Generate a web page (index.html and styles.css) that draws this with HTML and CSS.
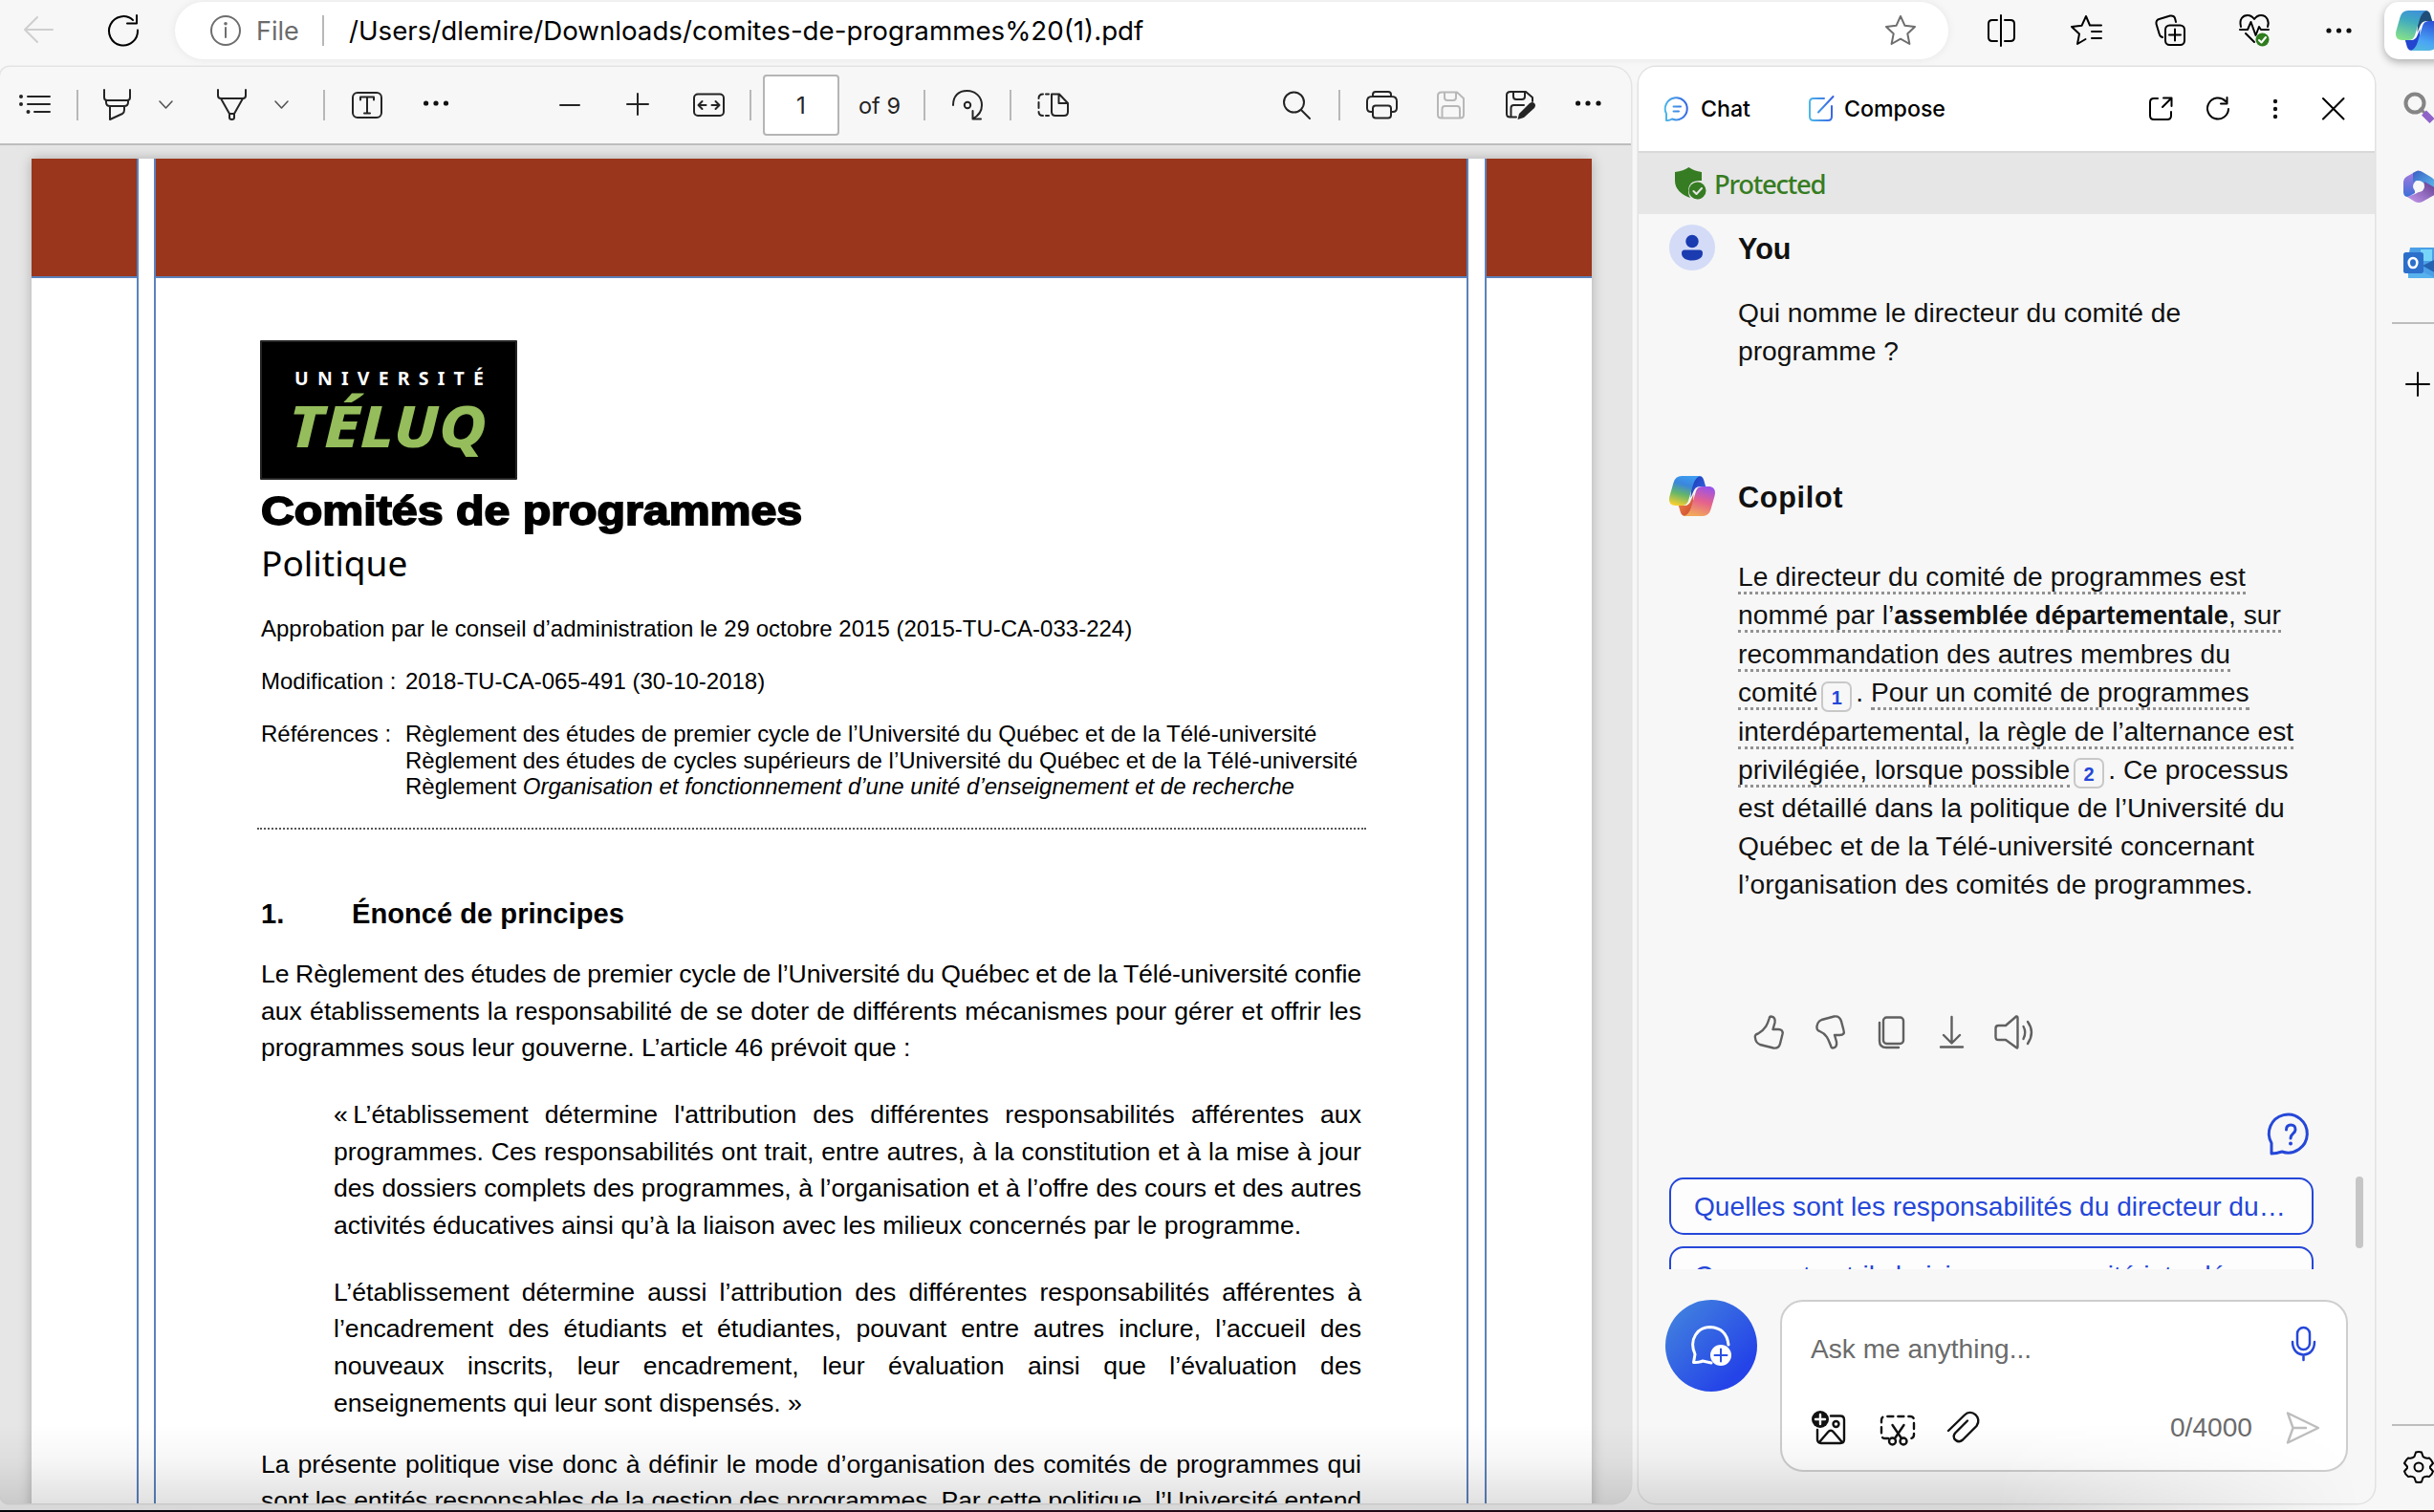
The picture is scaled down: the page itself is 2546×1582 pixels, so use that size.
FILE: index.html
```html
<!DOCTYPE html>
<html lang="fr">
<head>
<meta charset="utf-8">
<title>comites-de-programmes (1).pdf</title>
<link rel="stylesheet" href="styles.css">
</head>
<body>
<svg class="defs" width="0" height="0" aria-hidden="true">
  <defs>
    <linearGradient id="blue" gradientUnits="userSpaceOnUse" x1="0" y1="14" x2="26" y2="12"><stop offset="0" stop-color="#4fb9e8"/><stop offset="1" stop-color="#3560e4"/></linearGradient>
    <linearGradient id="ribbonA" x1="0.6" y1="0" x2="0.3" y2="1"><stop offset="0" stop-color="#3d9cf0"/><stop offset="0.3" stop-color="#3a86dd"/><stop offset="0.62" stop-color="#63b56b"/><stop offset="1" stop-color="#f5cf2e"/></linearGradient>
    <linearGradient id="ribbonB" x1="0.6" y1="0" x2="0.3" y2="1"><stop offset="0" stop-color="#f2a95a"/><stop offset="0.5" stop-color="#e5628c"/><stop offset="1" stop-color="#9a52ea"/></linearGradient>
    <linearGradient id="foldA" x1="0" y1="0" x2="1" y2="1"><stop offset="0" stop-color="#1a35b8"/><stop offset="1" stop-color="#3a6fe6"/></linearGradient>
    <linearGradient id="foldB" x1="0" y1="0" x2="1" y2="1"><stop offset="0" stop-color="#c8452e"/><stop offset="1" stop-color="#f58a4a"/></linearGradient>
    <linearGradient id="ribbonC" x1="0.6" y1="0" x2="0.3" y2="1"><stop offset="0" stop-color="#3e93d8"/><stop offset="0.35" stop-color="#3fa9c0"/><stop offset="1" stop-color="#85e08a"/></linearGradient>
    <linearGradient id="ribbonD" x1="0.6" y1="0" x2="0.3" y2="1"><stop offset="0" stop-color="#53b8e0"/><stop offset="0.3" stop-color="#4aa5f5"/><stop offset="1" stop-color="#2c50d8"/></linearGradient>
    <linearGradient id="m1" x1="0" y1="0" x2="0" y2="1"><stop offset="0" stop-color="#b07be0"/><stop offset="1" stop-color="#3c6fd8"/></linearGradient>
    <linearGradient id="m2" x1="0" y1="0" x2="1" y2="1"><stop offset="0" stop-color="#3b5fc4"/><stop offset="1" stop-color="#5cc4f2"/></linearGradient>
    <linearGradient id="m3" x1="0" y1="1" x2="1" y2="0"><stop offset="0" stop-color="#c79bf0"/><stop offset="1" stop-color="#5d3a8c"/></linearGradient>
    <path id="ribbon" d="M13 0H33C28 1 26 6 24.500 11L20 26Q18.500 31 13 31H7C1 31-1 27 .5 21L4.500 7Q6.500 0 13 0Z"/>
    <path id="fold" d="M27 0H31C35 0 36 3 37 7L38.200 11H32Q27 11 25 17L22.500 23L23.500 8Q25 1 30 0Z"/>
  </defs>
</svg>

<div class="window">
  <header class="topbar">
    <svg class="faint" width="32" height="32" viewBox="0 0 32 32"><path d="M31 15H2M15 2L2 15L15 28"/></svg>
    <svg class="black" width="34" height="34" viewBox="0 0 34 34"><path d="M32 16.500A15 15.200 0 1 1 27 6M31 1V9.500H21"/></svg>
    <div class="address">
      <svg class="grey" width="34" height="34" viewBox="0 0 34 34"><circle cx="17" cy="17" r="15"/><path d="M17 14V24"/><circle cx="17" cy="9.800" r="1.800" class="solid"/></svg>
      <span class="scheme">File</span>
      <i class="sep"></i>
      <span class="url">/Users/dlemire/Downloads/comites-de-programmes%20(1).pdf</span>
      <svg class="grey star" width="34" height="34" viewBox="0 0 34 34"><path d="M17 2L21.500 11.800L32 13L24.300 20.200L26.400 31L17 25.700L7.600 31L9.700 20.200L2 13L12.500 11.800Z"/></svg>
    </div>
    <svg class="black" width="32" height="32" viewBox="0 0 32 32"><path d="M15 0V32M11 5H6Q2 5 2 9V23Q2 27 6 27H11M19 5H25Q29 5 29 9V23Q29 27 25 27H19"/></svg>
    <svg class="black" width="34" height="34" viewBox="0 0 34 34"><path d="M32 11.500H20L16 2L11.500 11.800L1 13L9 20.500L7 31L15.500 26M22 18H32M22 25H32"/></svg>
    <svg class="black" width="34" height="34" viewBox="0 0 34 34"><rect x="11" y="11.500" width="20" height="20.500" rx="4.500"/><path d="M21 15.500V27.500M15 21.500H27M8 24L6 23Q5 22 4.500 20L1.500 10Q1 6 4.500 5L16 1.500Q20 1 21 4L22 8"/></svg>
    <svg class="black" width="34" height="36" viewBox="0 0 34 36"><path d="M2 14C0 6 4 2 9 2Q13 2 16 6Q19 2 23 2C29 2 32 8 30 14M1 17H9L12.500 9L17.500 23L21 14L23 17H31M7 21L16 30"/><circle cx="24.500" cy="27.500" r="7" fill="#2f7d1e" stroke="none"/><path class="on-fill" d="M21 28L23.500 30.500L28 25"/></svg>
    <svg class="dots" width="30" height="10" viewBox="0 0 30 10"><circle cx="3" cy="5" r="2.600"/><circle cx="13.500" cy="5" r="2.600"/><circle cx="24" cy="5" r="2.600"/></svg>
    <div class="copilot-tab">
      <svg width="48" height="42" viewBox="0 0 48 42"><g stroke="none"><use href="#fold" fill="#1f4e78"/><use href="#ribbon" fill="url(#ribbonC)"/><g transform="rotate(180 24 21)"><use href="#fold" fill="#2345cf"/><use href="#ribbon" fill="url(#ribbonD)"/></g></g></svg>
    </div>
  </header>

  <div class="body">
    <main class="viewer">
      <div class="toolbar">
        <svg width="34" height="24" viewBox="0 0 34 24"><path d="M9 3H32M9 11H32M16 19H32"/><g class="solid"><circle cx="2" cy="3" r="2"/><circle cx="2" cy="11" r="2"/><circle cx="9.500" cy="19" r="2"/></g></svg>
        <i class="sep"></i>
        <svg width="32" height="32" viewBox="0 0 32 32"><path d="M2 0V8Q2 11 5 11H26Q29 11 29 8V0M4 11V13Q4 17 8 17H23Q27 17 27 13V11M8 17V31L21 25Q23 24 23 21V17"/></svg>
        <svg class="thin" width="16" height="10" viewBox="0 0 16 10"><path d="M1 1L7.500 8L14 1"/></svg>
        <svg width="32" height="32" viewBox="0 0 32 32"><path d="M1 0V6Q1 9 4 9H27Q30 9 30 6V0M4 9L13 25H18L27 9M13 25V29Q13 31 15.500 31T18 29V25"/></svg>
        <svg class="thin" width="16" height="10" viewBox="0 0 16 10"><path d="M1 1L7.500 8L14 1"/></svg>
        <i class="sep"></i>
        <svg width="32" height="30" viewBox="0 0 32 30"><rect x="1" y="2" width="30" height="26" rx="5"/><path d="M9 9.500V6.500H23V9.500M16 6.500V23M13 23.500H19"/></svg>
        <svg class="dots up" width="30" height="10" viewBox="0 0 30 10"><circle cx="2.600" cy="5" r="2.600"/><circle cx="13" cy="5" r="2.600"/><circle cx="23.500" cy="5" r="2.600"/></svg>
        <svg width="22" height="22" viewBox="0 0 22 22"><path d="M0 11H20"/></svg>
        <svg width="24" height="24" viewBox="0 0 24 24"><path d="M0 11H22M11 0V22"/></svg>
        <svg width="34" height="26" viewBox="0 0 34 26"><rect x="1" y="1.500" width="31" height="22.500" rx="4"/><path d="M13.500 13H6M9.500 9L5.500 13L9.500 17M19.500 13H27M23.500 9L27.500 13L23.500 17"/></svg>
        <i class="sep"></i>
        <span class="page-input">1</span>
        <span class="page-total">of 9</span>
        <i class="sep"></i>
        <svg width="34" height="34" viewBox="0 0 34 34"><path d="M1 17C1 7 7 2 15.500 2S31 8 31 17Q31 26 22 31M21.500 23V31.500H30"/><circle cx="16" cy="17" r="3.200"/></svg>
        <i class="sep"></i>
        <svg width="34" height="26" viewBox="0 0 34 26"><path d="M15 1.500H23L32 11V20Q32 24 28 24H19Q15 24 15 20ZM22.500 1.500V11H32M6 1.500Q1.500 1.500 1.500 6M1.500 10V16M1.500 20Q1.500 24 6 24M9 1.500H12M9 24H12"/></svg>
        <svg width="32" height="30" viewBox="0 0 32 30"><circle cx="11.500" cy="12" r="10.500"/><path d="M19 20L28 29"/></svg>
        <i class="sep"></i>
        <svg width="34" height="30" viewBox="0 0 34 30"><path d="M7 22H5Q1 22 1 18V11Q1 6 6 6H27Q32 6 32 11V18Q32 22 28 22H26M7 6V4Q7 1 10 1H23Q26 1 26 4V6"/><rect x="7" y="15.500" width="19" height="13" rx="3"/></svg>
        <svg class="disabled" width="30" height="30" viewBox="0 0 30 30"><path d="M5 1.500H21L28 8V25Q28 28.500 24.500 28.500H4.500Q1 28.500 1 25V5Q1 1.500 5 1.500M8 1.500V7Q8 10 11 10H17Q20 10 20 7V1.500M5.500 28V19Q5.500 16 8.500 16H21Q24 16 24 19V28"/></svg>
        <svg width="34" height="32" viewBox="0 0 34 32"><path d="M11 28.500H4.500Q1 28.500 1 25V5.500Q1 2 5 2H21L28 8V12M8 2V7Q8 10 11 10H17Q20 10 20 7V2M5.500 28V19Q5.500 16 8.500 16H19"/><path class="solid" d="M12.500 31L14 25L25 14Q28 12 30 14T30 19L19 29Z"/></svg>
        <svg class="dots up" width="30" height="10" viewBox="0 0 30 10"><circle cx="2.600" cy="5" r="2.600"/><circle cx="13" cy="5" r="2.600"/><circle cx="24" cy="5" r="2.600"/></svg>
      </div>
      <div class="canvas">
        <article class="page">
          <div class="band"></div>
          <div class="gutter"></div>
          <div class="band content">
            <svg class="logo" width="267" height="144" viewBox="0 0 267 144"><rect width="267" height="144" fill="#000"/><text class="logo-top" x="35" y="46" textLength="198">UNIVERSITÉ</text><text class="logo-main" x="29" y="111" textLength="207" lengthAdjust="spacingAndGlyphs">TÉLUQ</text></svg>
            <h1><span>Comités de programmes</span></h1>
            <h2>Politique</h2>
            <p class="meta">Approbation par le conseil d’administration le 29 octobre 2015 (2015-TU-CA-033-224)</p>
            <div class="meta row"><span class="label">Modification :</span><span>2018-TU-CA-065-491 (30-10-2018)</span></div>
            <div class="meta row refs"><span class="label">Références :</span><div>Règlement des études de premier cycle de l’Université du Québec et de la Télé-université<br>Règlement des études de cycles supérieurs de l’Université du Québec et de la Télé-université<br>Règlement <em>Organisation et fonctionnement d’une unité d’enseignement et de recherche</em></div></div>
            <div class="rule"></div>
            <h3><span class="num">1.</span>Énoncé de principes</h3>
            <div class="para">
              <p class="full tight">Le Règlement des études de premier cycle de l’Université du Québec et de la Télé-université confie</p>
              <p class="full">aux établissements la responsabilité de se doter de différents mécanismes pour gérer et offrir les</p>
              <p>programmes sous leur gouverne. L’article 46 prévoit que :</p>
            </div>
            <div class="para quote">
              <p class="full">«&#8239;L’établissement détermine l'attribution des différentes responsabilités afférentes aux</p>
              <p class="full">programmes. Ces responsabilités ont trait, entre autres, à la constitution et à la mise à jour</p>
              <p class="full">des dossiers complets des programmes, à l’organisation et à l’offre des cours et des autres</p>
              <p>activités éducatives ainsi qu’à la liaison avec les milieux concernés par le programme.</p>
            </div>
            <div class="para quote">
              <p class="full">L’établissement détermine aussi l’attribution des différentes responsabilités afférentes à</p>
              <p class="full">l’encadrement des étudiants et étudiantes, pouvant entre autres inclure, l’accueil des</p>
              <p class="full">nouveaux inscrits, leur encadrement, leur évaluation ainsi que l’évaluation des</p>
              <p>enseignements qui leur sont dispensés. »</p>
            </div>
            <div class="para after">
              <p class="full">La présente politique vise donc à définir le mode d’organisation des comités de programmes qui</p>
              <p class="full tight">sont les entités responsables de la gestion des programmes. Par cette politique, l’Université entend</p>
            </div>
          </div>
          <div class="gutter"></div>
          <div class="band"></div>
        </article>
      </div>
    </main>

    <aside class="panel">
      <div class="panel-head">
        <svg class="tint" width="28" height="28" viewBox="0 0 28 28"><path d="M2 26V19A11.500 11.500 0 1 1 8 24.500Q5 26.500 2 26ZM9.500 11.500H17M9.500 16.500H15"/></svg>
        <span>Chat</span>
        <svg class="tint" width="28" height="28" viewBox="0 0 28 28"><path d="M16 3H5Q1 3 1 7V22Q1 26 5 26H20Q24 26 24 22V11M10 17.500L25.500 1"/></svg>
        <span>Compose</span>
        <svg class="black" width="26" height="26" viewBox="0 0 26 26"><path d="M9 2H5Q1 2 1 6V20Q1 24 5 24H19Q23 24 23 20V16M15 1.500H23.500V10M23 2L14 11"/></svg>
        <svg class="black" width="26" height="26" viewBox="0 0 26 26"><path d="M23 13A11 11 0 1 1 20 5M21.500 1V7.500H15"/></svg>
        <svg class="dots" width="8" height="24" viewBox="0 0 8 24"><circle cx="4" cy="4" r="2.200"/><circle cx="4" cy="12" r="2.200"/><circle cx="4" cy="20" r="2.200"/></svg>
        <svg class="black" width="24" height="24" viewBox="0 0 24 24"><path d="M1 1L22.500 22.500M22.500 1L1 22.500"/></svg>
      </div>
      <div class="protected">
        <svg width="34" height="36" viewBox="0 0 34 36"><g stroke="none" fill="#367c22"><path d="M14.500 1Q20 5 28 6V15Q14 14 14 26Q14 30 16 33Q0 27 0 15V6Q9 5 14.500 1Z"/><circle cx="23.500" cy="25.500" r="9"/></g><path class="on-fill" d="M19.500 26L22.500 29L28 23"/></svg>
        <span>Protected</span>
      </div>
      <div class="chat">
        <div class="who">
          <svg width="48" height="48" viewBox="0 0 48 48"><g stroke="none"><circle cx="24" cy="24" r="24" fill="#d3dbf7"/><g fill="#1b3bb0"><circle cx="24" cy="17.500" r="6.700"/><path d="M16 26.500H32Q35 26.500 35 30C35 35 30 37.500 24 37.500S13 35 13 30Q13 26.500 16 26.500Z"/></g></g></svg>
          <span>You</span>
        </div>
        <p class="msg">Qui nomme le directeur du comité de<br>programme ?</p>
        <div class="who bot">
          <svg width="48" height="42" viewBox="0 0 48 42"><g stroke="none"><use href="#fold" fill="url(#foldA)"/><use href="#ribbon" fill="url(#ribbonA)"/><g transform="rotate(180 24 21)"><use href="#fold" fill="url(#foldB)"/><use href="#ribbon" fill="url(#ribbonB)"/></g></g></svg>
          <span>Copilot</span>
        </div>
        <p class="msg reply"><u>Le directeur du comité de programmes est</u><br><u>nommé par l’<b>assemblée départementale</b>, sur</u><br><u>recommandation des autres membres du</u><br><u>comité</u><sup>1</sup>. <u>Pour un comité de programmes</u><br><u>interdépartemental, la règle de l’alternance est</u><br><u>privilégiée, lorsque possible</u><sup>2</sup>. Ce processus<br>est détaillé dans la politique de l’Université du<br>Québec et de la Télé-université concernant<br>l’organisation des comités de programmes.</p>
        <div class="actions">
          <svg width="32" height="36" viewBox="0 0 32 36"><path d="M17.500 1.500Q22.500 2 21.500 8L19.500 15H25Q30.500 15 29.500 20L27 30Q25.500 35.500 20 34.500L6 31Q1.500 29 1 24Q0 20.500 4 19.500C12 15 14 9 15.500 4Q16 1.500 17.500 1.500Z"/></svg>
          <svg width="32" height="36" viewBox="0 0 32 36"><path d="M18 34.500Q23 34 22 28L20 21H25.500Q31 21 29.500 16L27 6.500Q25 .5 19.500 1.500L6.500 5Q2 7 1.500 12Q1 16 4.500 17C12 20 14 27 16 32Q16.500 34.500 18 34.500Z"/></svg>
          <svg width="30" height="36" viewBox="0 0 30 36"><rect x="5" y="2.500" width="21" height="27.500" rx="3.500"/><path d="M1 8V27Q1 34 8 34H21"/></svg>
          <svg width="28" height="36" viewBox="0 0 28 36"><path d="M12.500 2V28M4 21L12.500 29.500L21 21M1 33.500H24"/></svg>
          <svg width="44" height="36" viewBox="0 0 44 36"><path d="M1.500 14Q1.500 11 4.500 11H12L23 1.500Q24.500 1 24.500 3V33Q24.500 35.500 23 34L12 26H4.500Q1.500 26 1.500 23ZM30.500 12Q34 18 30.500 25M35 7Q43 18 35 30"/></svg>
        </div>
        <svg class="ask" width="44" height="44" viewBox="0 0 44 44"><path d="M2 42V31A20 20 0 1 1 13 40Q7 42 2 42Z"/><path d="M17.500 17Q17.500 12 22.300 12T27 17C27 21 22 21 22 26"/><circle cx="22" cy="31.500" r="2" fill="#2547d8" stroke="none"/></svg>
        <div class="suggestion">Quelles sont les responsabilités du directeur du…</div>
        <div class="suggestion">Comment est-il choisi pour un comité interdép…</div>
        <i class="thumb"></i>
      </div>
      <div class="composer">
        <div class="new-topic"><svg width="44" height="44" viewBox="0 0 44 44"><path class="bubble" d="M22 40L13 38Q8 40 3.500 39.500L5 31C-2 15 8 2.500 21 2.500Q38 3.500 40 21"/><circle cx="32" cy="32" r="11" fill="#fff" stroke="none"/><path stroke="#2a50e4" d="M32 25.500V38.500M25.500 32H38.500"/></svg></div>
        <div class="prompt">
          <div class="prompt-row">
            <span>Ask me anything...</span>
            <svg class="mic" width="28" height="38" viewBox="0 0 28 38"><rect x="7" y="2" width="13" height="23" rx="6.500"/><path d="M2 17C2 35 25 35 25 17M13.500 30.500V36"/></svg>
          </div>
          <div class="prompt-row tools">
            <svg width="38" height="38" viewBox="0 0 38 38"><circle cx="9" cy="10" r="9" fill="#111" stroke="none"/><path class="on-fill" d="M9 5V15M4 10H14"/><path d="M20 6.500H30Q34 6.500 34 10.500V31Q34 35 30 35H10Q6 35 6 31V21M8 34L17 23.500Q20 20 23 23.500L32 34"/><circle cx="25.500" cy="15" r="3"/></svg>
            <svg width="38" height="38" viewBox="0 0 38 38"><path stroke-dasharray="6 5" d="M8 30H5Q1 30 1 26V11Q1 7 5 7H31Q35 7 35 11V26Q35 30 31 30H28"/><path d="M12.500 16L22 30M24.500 16L15 30"/><circle cx="12.500" cy="33" r="3.500"/><circle cx="24" cy="33" r="3.500"/></svg>
            <svg width="38" height="38" viewBox="0 0 38 38"><path d="M1 22L18 5.500C25-2 37 8 30.500 17L16 31.500C11 36 4 30 8 24.500L21 11.500"/></svg>
            <span>0/4000</span>
            <svg class="send" width="36" height="36" viewBox="0 0 36 36"><path d="M1 2.500L33 18L1 33.500L6.500 18ZM6.500 18H20"/></svg>
          </div>
        </div>
      </div>
    </aside>

    <nav class="rail">
      <svg class="search" width="36" height="36" viewBox="0 0 36 36"><circle cx="12" cy="12" r="9.500" stroke="#858585" stroke-width="4"/><path stroke="#858585" stroke-width="3" d="M18 18L23 23"/><path stroke="#8f63c9" stroke-width="7" stroke-linecap="butt" d="M21.500 22L30 30.500"/></svg>
      <svg class="office" width="34" height="36" viewBox="0 0 34 36"><g stroke="none"><path fill="url(#m1)" d="M12 3L3 8Q0 10 0 13V24Q0 29 5 29L12 25V13L16 1Z"/><path fill="url(#m2)" d="M12 3Q16 .5 20 3L30 9Q34 12 34 16V22L22 15L14 12L10 14V4Z"/><path fill="url(#m3)" d="M22 13L34 20V26L20 34Q16 36 12 34L4 29L12 26L20 22Z"/><circle cx="16" cy="18" r="6" fill="#f7f7f7"/></g></svg>
      <svg class="outlook" width="34" height="34" viewBox="0 0 34 34"><g stroke="none"><path fill="#4b9fe6" d="M7 1H34V32H5V12Z"/><path fill="#77d5fa" d="M18 3H30V15H18Z"/><path fill="#2563b0" d="M20 20L34 13V28Z"/><path fill="#58b2ee" d="M6 20L34 33H5Z"/><rect y="6" width="21" height="22" rx="2.500" fill="#2c6fcb"/></g><ellipse cx="10" cy="17" rx="4.300" ry="5" stroke="#fff" stroke-width="2.600"/></svg>
      <i class="line"></i>
      <svg class="black plus" width="26" height="26" viewBox="0 0 26 26"><path d="M0 12H24M12 0V24"/></svg>
      <i class="line low"></i>
      <svg class="black gear" width="36" height="36" viewBox="0 0 36 36"><circle cx="17" cy="18" r="4.500"/><path d="M14 2.500Q17 1.500 20 2.500L21.500 7Q24 9.500 28 8.500Q30.500 10.500 32 14L29 17.500V19L32 22.500Q31 26 28 28Q24 27 21.500 29L20 33.500Q17 34.500 14 33.500L12.500 29Q10 27 6 28Q3 26 2 22.500L5 19V17.500L2 14Q3.500 10.500 6 8.500Q10 9.500 12.500 7Z"/></svg>
    </nav>
  </div>
  <div class="shade"></div>
  <div class="desk"></div>
</div>
</body>
</html>
```
FILE: styles.css
```css
* { box-sizing: border-box; }
body { margin: 0; background: #f7f7f7; color: #000; font-family: "Liberation Sans", Arial, sans-serif; }
h1, h2, h3, p { margin: 0; font-weight: 400; }
.defs { position: absolute; }
svg { fill: none; stroke: #242424; stroke-width: 2; stroke-linecap: round; stroke-linejoin: round; flex: none; display: block; overflow: visible; }
.solid { fill: currentColor; stroke: none; }
.dots { fill: #111; stroke: none; }
.black { stroke: #000; }
.grey { stroke: #6e6e6e; color: #6e6e6e; }
.faint { stroke: #cfcfcf; }
.thin { stroke: #555; stroke-width: 1.600; }
.disabled { stroke: #b8b8b8; }
.tint { stroke: url(#blue); }
.on-fill { stroke: #fff; }
.sep { display: block; width: 2px; height: 32px; background: #b8b8b8; }

.window { position: relative; width: 2546px; height: 1582px; overflow: hidden; display: flex; flex-direction: column; background: #f7f7f7; }

/* browser bar */
.topbar { height: 70px; padding: 0 0 6px 24px; display: grid; grid-template-columns: 88px 71px 1895px 88px 88px 88px 91px 61px 52px; align-items: center; flex: none; }
.address { width: 1855px; height: 60px; border-radius: 30px; background: #fff; display: flex; align-items: center; padding: 0 33px 0 36px; box-shadow: 0 0 6px 2px #ececec; }
.scheme { width: 69px; margin-left: 15px; font: 27px Inter, sans-serif; color: #6b6b6b; }
.url { margin-left: 26px; font: 27.700px Inter, sans-serif; white-space: nowrap; }
.star { margin-left: auto; }
.copilot-tab { width: 72px; height: 60px; border-radius: 15px; background: #fff; padding: 9px 12px; box-shadow: 0 3px 9px rgba(0,0,0,.3); }

.body { display: flex; height: 1503px; flex: none; }

/* pdf viewer */
.viewer { width: 1706px; height: 1503px; border-radius: 10px 20px 20px 10px; overflow: hidden; background: #e6e6e6; box-shadow: 0 0 0 1.500px #e4e4e4; flex: none; display: flex; flex-direction: column; }
.toolbar { height: 82px; flex: none; border-bottom: 2px solid #bdbdbd; background: #f7f7f7; padding-left: 20px; display: grid; grid-template-columns: 60px 27px 59px 61px 60px 51px 30px 75px 143px 70px 69px 59px 14px 100px 68px 30px 60px 29px 257px 58px 29px 74px 72px 73px 40px; align-items: center; color: #242424; }
.up { margin-top: -4px; }
.page-input { width: 80px; height: 64px; border: 2px solid #b5b5b5; border-radius: 4px; background: #fff; text-align: center; font: 24px/62px Inter, sans-serif; }
.page-total { font: 23.500px Inter, sans-serif; }
.canvas { flex: 1; padding: 14px 0 0 33px; overflow: hidden; }
.page { width: 1632px; height: 1440px; background: #fff; display: grid; grid-template-columns: 110px 20px 1371px 21px 110px; box-shadow: 0 0 12px rgba(0,0,0,.25); }
.gutter { border: solid #5b82bd; border-width: 0 2px; }
.band::before { content: ""; display: block; height: 123px; background: #99361b; border-bottom: 2px solid #5b82bd; }
.content > * { margin-left: 110px; }
.logo { margin-top: 66px; }
.logo text { stroke: none; }
.logo-top { font: 700 19.500px "Noto Sans", sans-serif; fill: #fff; }
.logo-main { font: italic 800 61px "Noto Sans", sans-serif; fill: #95bd5b; }
h1 { margin-top: 8px; height: 50px; font-size: 43px; line-height: 50px; white-space: nowrap; }
h1 span { display: inline-block; font-weight: 700; -webkit-text-stroke: 1.800px #000; transform: scaleX(1.123); transform-origin: left; }
h2 { margin-top: 5px; font: 37px/50px "Noto Sans", sans-serif; }
.meta { font-size: 24px; line-height: 28px; white-space: nowrap; margin-top: 30px; }
.meta.row { display: flex; margin-top: 27px; }
.meta.refs { line-height: 27.500px; }
.label { width: 151px; }
.rule { margin: 29px 0 0 106px; width: 1160px; border-top: 2px dotted #555; }
h3 { margin-top: 68px; font-size: 29.140px; line-height: 40px; font-weight: 700; display: flex; }
.num { width: 95px; }
.para { width: 1151px; margin-top: 24.500px; font-size: 26.640px; line-height: 38.600px; }
.para p { white-space: nowrap; }
.para .full { text-align: justify; text-align-last: justify; white-space: normal; height: 38.600px; }
.para .tight { letter-spacing: -.16px; word-spacing: -2.500px; }
.quote { margin-left: 186px; width: 1075px; margin-top: 31.300px; }
.after { margin-top: 25.500px; }

/* assistant */
.panel { width: 770px; margin-left: 8px; height: 1503px; border-radius: 18px; overflow: hidden; background: #f7f7f7; box-shadow: 0 0 0 1.500px #e2e2e2; flex: none; display: flex; flex-direction: column; }
.panel-head { height: 90px; flex: none; background: #fff; border-bottom: 2px solid #d9d9d9; padding-left: 27px; display: grid; grid-template-columns: 38px 113px 37px 319px 60px 68px 53px 30px; align-items: center; font: 500 23.180px Inter, sans-serif; color: #000; }
.protected { height: 64px; flex: none; background: #e6e6e6; display: flex; align-items: center; padding-left: 38px; color: #367c22; font: 500 27.500px/36px "Noto Sans", sans-serif; letter-spacing: -1.300px; }
.protected .on-fill { stroke: #e6e6e6; }
.protected span { margin-left: 7px; margin-top: 2px; }
.chat { position: relative; height: 1104px; flex: none; overflow: hidden; padding: 11px 64px 0 32px; }
.who { display: flex; align-items: center; height: 48px; font-size: 30.600px; font-weight: 700; color: #111; }
.who span { margin: 2px 0 0 24px; }
.bot { margin-top: 108px; }
.bot span { letter-spacing: .7px; }
.msg { margin: 24px 0 0 72px; font-size: 28.200px; line-height: 40px; color: #111; white-space: nowrap; letter-spacing: .03px; }
.reply { margin-top: 40px; }
.reply b { font-size: 27.300px; }
.reply u { text-decoration: none; border-bottom: 3px dotted #929292; }
sup { display: inline-block; width: 32px; height: 32px; margin: 0 4px; border: 2px solid #c8c8c8; border-radius: 7px; font-size: 20px; line-height: 30px; font-weight: 700; text-align: center; color: #2547d8; vertical-align: -2.500px; }
.actions { margin: 117px 0 0 89px; display: grid; grid-template-columns: 64px 66px 64px 57px 44px; }
.actions svg { stroke: #606060; stroke-width: 2.400; }
.ask { margin: 67px 2px 0 auto; stroke: #2547d8; stroke-width: 3; }
.suggestion { margin-top: 12px; height: 60px; border: 2px solid #2547d8; border-radius: 15px; background: #fdfdfd; color: #2547d8; font-size: 28.120px; line-height: 57px; padding-left: 24px; white-space: nowrap; }
.ask + .suggestion { margin-top: 23px; }
.thumb { position: absolute; right: 12px; top: 1007px; width: 8px; height: 75px; border-radius: 4px; background: #c6c6c6; }
.composer { display: flex; gap: 24px; padding: 32px 28px 0; }
.new-topic { width: 96px; height: 96px; border-radius: 50%; background: linear-gradient(135deg, #4180df 10%, #2443e8 80%); padding: 26px 0 0 26px; flex: none; }
.bubble { stroke: #fff; stroke-width: 3; }
.prompt { width: 594px; height: 180px; border: 2px solid #cecece; border-radius: 24px; background: #fff; padding: 30px 26px 0 30px; font-size: 28.100px; line-height: 40px; color: #6b6b6b; flex: none; }
.prompt-row { display: flex; height: 40px; justify-content: space-between; }
.mic { stroke: #2547d8; stroke-width: 2.500; margin: -5px 4px 0 0; }
.tools { display: grid; grid-template-columns: 72px 70px 233px 122px 36px; margin-top: 42px; align-items: center; justify-content: start; margin-left: 1px; }
.tools svg { stroke: #111; stroke-width: 2.400; }
.tools .send { stroke: #bdbdbd; }

/* side rail */
.rail { width: 62px; display: flex; flex-direction: column; flex: none; padding-left: 18px; }
.rail svg { margin-left: 12px; }
.rail .search { margin-top: 26px; }
.office { margin-top: 45px; }
.outlook { margin-top: 45px; }
.line { display: block; height: 2px; background: #bdbdbd; margin-top: 45px; flex: none; }
.rail .plus { margin: 51px 0 0 15px; }
.low { margin-top: 1074px; }
.rail .gear { margin: 25px 0 0 11px; }

.shade { position: absolute; inset: auto 0 2px 0; height: 90px; background: linear-gradient(transparent, rgba(0,0,0,.03) 40%, rgba(0,0,0,.13)); -webkit-mask-image: linear-gradient(to right, #000 82%, transparent 97%); mask-image: linear-gradient(to right, #000 82%, transparent 97%); }
.desk { position: absolute; inset: auto 0 0 0; height: 2px; background: linear-gradient(to right, #05060c, #2a0a1c 40%, #1a0814 65%, #4a1216); }
```
